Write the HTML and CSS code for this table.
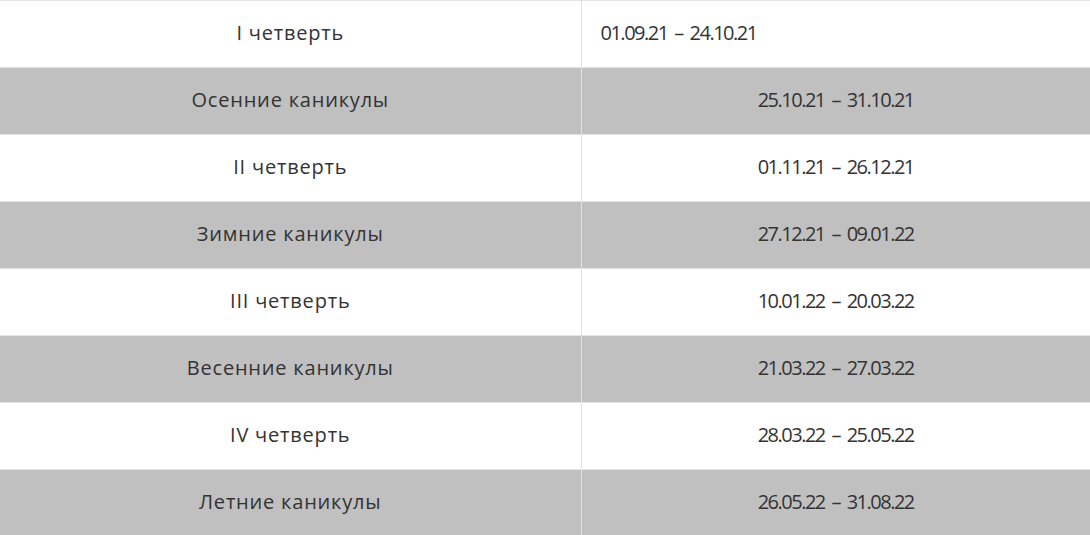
FILE: index.html
```html
<!DOCTYPE html>
<html lang="ru">
<head>
<meta charset="utf-8">
<link rel="stylesheet" href="styles.css">
</head>
<body>
<table class="schedule">
  <tbody>
    <tr class="row"><td class="name">I четверть</td><td class="dates dates-left">01.09.21 – 24.10.21</td></tr>
    <tr class="row row-gray"><td class="name">Осенние каникулы</td><td class="dates">25.10.21 – 31.10.21</td></tr>
    <tr class="row"><td class="name">II четверть</td><td class="dates">01.11.21 – 26.12.21</td></tr>
    <tr class="row row-gray"><td class="name">Зимние каникулы</td><td class="dates">27.12.21 – 09.01.22</td></tr>
    <tr class="row"><td class="name">III четверть</td><td class="dates">10.01.22 – 20.03.22</td></tr>
    <tr class="row row-gray"><td class="name">Весенние каникулы</td><td class="dates">21.03.22 – 27.03.22</td></tr>
    <tr class="row"><td class="name">IV четверть</td><td class="dates">28.03.22 – 25.05.22</td></tr>
    <tr class="row row-gray"><td class="name">Летние каникулы</td><td class="dates">26.05.22 – 31.08.22</td></tr>
  </tbody>
</table>
</body>
</html>
```
FILE: styles.css
```css
html, body {
  margin: 0;
  padding: 0;
  background: #ffffff;
}
body {
  font-family: "Open Sans", "Noto Sans", sans-serif;
  color: #333333;
}
.schedule {
  width: 1090px;
  border-collapse: collapse;
  table-layout: fixed;
  border-top: 1px solid #e2e2e2;
}
.row td {
  box-sizing: border-box;
  height: 67px;
  padding: 0 0 2px 0;
  border-bottom: 1px solid #e2e2e2;
  font-size: 20px;
  line-height: 24px;
  font-weight: 400;
  text-align: center;
  vertical-align: middle;
}
.name {
  width: 581px;
  border-right: 1px solid #e2e2e2;
  letter-spacing: 0.8px;
}
.dates {
  letter-spacing: -1.5px;
  word-spacing: 3px;
}
.dates-left {
  text-align: left !important;
  padding-left: 19px !important;
}
.row-gray td {
  background: #c0c0c0;
}
```
